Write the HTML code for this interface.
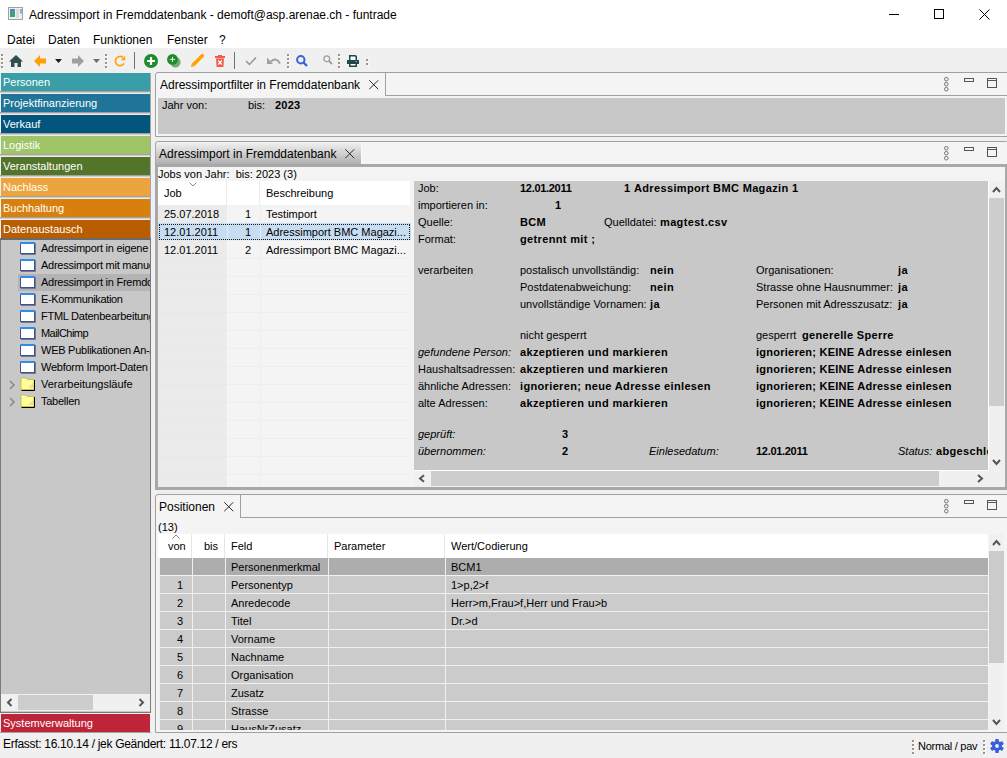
<!DOCTYPE html>
<html><head><meta charset="utf-8">
<style>
*{margin:0;padding:0;box-sizing:border-box}
html,body{width:1007px;height:758px;overflow:hidden;background:#f0f0f0;font-family:"Liberation Sans",sans-serif;color:#000}
.a{position:absolute}
svg.a{overflow:visible}
.t{position:absolute;white-space:nowrap;line-height:1}
.f12{font-size:12px}
.f11{font-size:11px}
.b{font-weight:bold;letter-spacing:0.2px}
.i{font-style:italic}
.bar{position:absolute;left:0;width:151px;height:21px;border-right:1px solid #a8a8a8}
.bar .c{position:absolute;left:1px;top:0;width:149px;height:18px}
.bar .s{position:absolute;left:0;top:18px;width:150px;height:1px;background:#a8a0a0}
.bar .l{position:absolute;left:0;top:19px;width:150px;height:2px;background:#efebea;border-top:1px solid #d0cece}
.bar span{position:absolute;left:3px;top:4px;font-size:11px;color:#fff;white-space:nowrap;line-height:1}
</style></head><body>
<div class="a" style="left:0px;top:0px;width:1007px;height:48px;background:#fff;"></div>
<svg class="a" style="left:8px;top:7px" width="15" height="13" viewBox="0 0 15 13"><rect x="0.5" y="0.5" width="14" height="12" fill="#f0f0f0" stroke="#a0a0a0"/><rect x="2" y="2" width="5" height="8" fill="url(#ig)"/><rect x="8" y="2" width="3" height="9" fill="#dcdcdc"/><rect x="12" y="2" width="2" height="4" fill="#8ab0e0"/><rect x="12" y="6" width="2" height="1" fill="#a8d8a8"/><defs><linearGradient id="ig" x1="0" y1="0" x2="0" y2="1"><stop offset="0" stop-color="#4a88c8"/><stop offset="1" stop-color="#48a858"/></linearGradient></defs></svg>
<div class="t f12" style="left:29px;top:9px;">Adressimport in Fremddatenbank - demoft@asp.arenae.ch - funtrade</div>
<div class="a" style="left:889px;top:14px;width:10px;height:1px;background:#000;"></div>
<div class="a" style="left:934px;top:9px;width:10px;height:10px;background:transparent;border:1px solid #000"></div>
<svg class="a" style="left:979px;top:9px" width="12" height="11" viewBox="0 0 12 11"><path d="M0.5 0.5L10.5 10.5M10.5 0.5L0.5 10.5" stroke="#000" stroke-width="1"/></svg>
<div class="t f12" style="left:7px;top:34px;">Datei</div>
<div class="t f12" style="left:48px;top:34px;">Daten</div>
<div class="t f12" style="left:93px;top:34px;">Funktionen</div>
<div class="t f12" style="left:167px;top:34px;">Fenster</div>
<div class="t f12" style="left:219px;top:34px;">?</div>
<div class="a" style="left:1px;top:54px;width:2px;height:2px;background:#9a9482;box-shadow:1px 1px 0 #fbfbfb"></div>
<div class="a" style="left:1px;top:58px;width:2px;height:2px;background:#9a9482;box-shadow:1px 1px 0 #fbfbfb"></div>
<div class="a" style="left:1px;top:62px;width:2px;height:2px;background:#9a9482;box-shadow:1px 1px 0 #fbfbfb"></div>
<div class="a" style="left:1px;top:66px;width:2px;height:2px;background:#9a9482;box-shadow:1px 1px 0 #fbfbfb"></div>
<div class="a" style="left:105px;top:54px;width:2px;height:2px;background:#9a9482;box-shadow:1px 1px 0 #fbfbfb"></div>
<div class="a" style="left:105px;top:58px;width:2px;height:2px;background:#9a9482;box-shadow:1px 1px 0 #fbfbfb"></div>
<div class="a" style="left:105px;top:62px;width:2px;height:2px;background:#9a9482;box-shadow:1px 1px 0 #fbfbfb"></div>
<div class="a" style="left:105px;top:66px;width:2px;height:2px;background:#9a9482;box-shadow:1px 1px 0 #fbfbfb"></div>
<div class="a" style="left:287px;top:54px;width:2px;height:2px;background:#9a9482;box-shadow:1px 1px 0 #fbfbfb"></div>
<div class="a" style="left:287px;top:58px;width:2px;height:2px;background:#9a9482;box-shadow:1px 1px 0 #fbfbfb"></div>
<div class="a" style="left:287px;top:62px;width:2px;height:2px;background:#9a9482;box-shadow:1px 1px 0 #fbfbfb"></div>
<div class="a" style="left:287px;top:66px;width:2px;height:2px;background:#9a9482;box-shadow:1px 1px 0 #fbfbfb"></div>
<div class="a" style="left:338px;top:54px;width:2px;height:2px;background:#9a9482;box-shadow:1px 1px 0 #fbfbfb"></div>
<div class="a" style="left:338px;top:58px;width:2px;height:2px;background:#9a9482;box-shadow:1px 1px 0 #fbfbfb"></div>
<div class="a" style="left:338px;top:62px;width:2px;height:2px;background:#9a9482;box-shadow:1px 1px 0 #fbfbfb"></div>
<div class="a" style="left:338px;top:66px;width:2px;height:2px;background:#9a9482;box-shadow:1px 1px 0 #fbfbfb"></div>
<div class="a" style="left:366px;top:59px;width:2px;height:2px;background:#9a9482;box-shadow:1px 1px 0 #fbfbfb"></div>
<div class="a" style="left:366px;top:63px;width:2px;height:2px;background:#9a9482;box-shadow:1px 1px 0 #fbfbfb"></div>
<svg class="a" style="left:9px;top:55px" width="14" height="12" viewBox="0 0 14 12"><path d="M7 0L0 6.5H2V12H5.5V8H8.5V12H12V6.5H14Z" fill="#2f4f4f"/></svg>
<svg class="a" style="left:34px;top:55px" width="12" height="12" viewBox="0 0 12 12"><path d="M0 6L6 0V3.5H12V8.5H6V12Z" fill="#ffa000"/></svg>
<svg class="a" style="left:55px;top:59px" width="7" height="4" viewBox="0 0 7 4"><path d="M0 0H7L3.5 4Z" fill="#1a1a1a"/></svg>
<svg class="a" style="left:72px;top:55px" width="12" height="12" viewBox="0 0 12 12"><path d="M12 6L6 0V3.5H0V8.5H6V12Z" fill="#a0a0a0"/></svg>
<svg class="a" style="left:93px;top:59px" width="7" height="4" viewBox="0 0 7 4"><path d="M0 0H7L3.5 4Z" fill="#707070"/></svg>
<svg class="a" style="left:114px;top:55px" width="12" height="12" viewBox="0 0 12 12"><path d="M9.98 8.3A4.6 4.6 0 1 1 8.96 2.48" stroke="#ffa000" stroke-width="1.6" fill="none"/><path d="M11.2 0.8V5.2H6.8Z" fill="#ffa000"/></svg>
<div class="a" style="left:134px;top:52px;width:1px;height:17px;background:#707070;"></div>
<svg class="a" style="left:144px;top:54px" width="14" height="14" viewBox="0 0 14 14"><circle cx="7" cy="7" r="7" fill="#1e8b2c"/><path d="M7 3V11M3 7H11" stroke="#fff" stroke-width="2.2"/></svg>
<svg class="a" style="left:166px;top:53px" width="16" height="16" viewBox="0 0 16 16"><circle cx="9.4" cy="9.2" r="5.2" fill="#72ae72"/><circle cx="6.5" cy="6.4" r="5.4" fill="#1e8b2c"/><path d="M6.5 3.8V9M3.9 6.4H9.1" stroke="#fff" stroke-width="0.9"/></svg>
<svg class="a" style="left:190px;top:54px" width="14" height="14" viewBox="0 0 14 14"><path d="M3 11L9.6 4.4" stroke="#ffa000" stroke-width="3.6"/><path d="M10.4 3.6L12.3 1.7" stroke="#ffa000" stroke-width="3.6" stroke-linecap="round"/><path d="M1 13L1.73 9.73L4.27 12.27Z" fill="#ffa000"/></svg>
<svg class="a" style="left:215px;top:55px" width="10" height="12" viewBox="0 0 10 12"><rect x="0" y="1" width="10" height="2" fill="#f65a47"/><rect x="3" y="0" width="4" height="1.5" fill="#f65a47"/><path d="M1 3.5H9L8.4 12H1.6Z" fill="#f65a47"/><path d="M3.2 5.5L6.8 9.5M6.8 5.5L3.2 9.5" stroke="#fff" stroke-width="1.3"/></svg>
<div class="a" style="left:234px;top:52px;width:1px;height:17px;background:#707070;"></div>
<svg class="a" style="left:245px;top:56px" width="12" height="10" viewBox="0 0 12 10"><path d="M1 5L4.5 8.5L11 1.5" stroke="#939393" stroke-width="1.5" fill="none"/></svg>
<svg class="a" style="left:267px;top:57px" width="14" height="8" viewBox="0 0 14 8"><path d="M4 4.5Q9 -0.5 13 6.5" stroke="#a0a0a0" stroke-width="2" fill="none"/><path d="M0 0.5V7H6Z" fill="#a0a0a0"/></svg>
<svg class="a" style="left:296px;top:55px" width="12" height="12" viewBox="0 0 12 12"><circle cx="4.8" cy="4.8" r="3.7" stroke="#3c5fe0" stroke-width="2" fill="none"/><path d="M7.5 7.5L11 11" stroke="#3c5fe0" stroke-width="2.4"/></svg>
<svg class="a" style="left:323px;top:55px" width="10" height="10" viewBox="0 0 10 10"><circle cx="3.8" cy="3.8" r="2.9" stroke="#9a9a9a" stroke-width="1.3" fill="none"/><path d="M6 6L9 9" stroke="#9a9a9a" stroke-width="1.8"/></svg>
<svg class="a" style="left:347px;top:55px" width="12" height="12" viewBox="0 0 12 12"><path d="M2.75 5V0.75H8L9.25 2V5" stroke="#1e4a4a" stroke-width="1.5" fill="#fff"/><path d="M7.5 0.5L9.5 2.5V0.5Z" fill="#1e4a4a"/><rect x="0" y="5" width="12" height="4" fill="#1e4a4a"/><rect x="2.75" y="8.25" width="6.5" height="3" stroke="#1e4a4a" stroke-width="1.5" fill="#fff"/><rect x="8.5" y="6" width="1.5" height="1" fill="#9ab"/></svg>
<div class="bar" style="top:73px"><div class="c" style="background:#3a9ea8"></div><div class="s"></div><div class="l"></div><span>Personen</span></div>
<div class="bar" style="top:94px"><div class="c" style="background:#1f7599"></div><div class="s"></div><div class="l"></div><span>Projektfinanzierung</span></div>
<div class="bar" style="top:115px"><div class="c" style="background:#02567e"></div><div class="s"></div><div class="l"></div><span>Verkauf</span></div>
<div class="bar" style="top:136px"><div class="c" style="background:#a0c468"></div><div class="s"></div><div class="l"></div><span>Logistik</span></div>
<div class="bar" style="top:157px"><div class="c" style="background:#53752a"></div><div class="s"></div><div class="l"></div><span>Veranstaltungen</span></div>
<div class="bar" style="top:178px"><div class="c" style="background:#eba43e"></div><div class="s"></div><div class="l"></div><span>Nachlass</span></div>
<div class="bar" style="top:199px"><div class="c" style="background:#d8800e"></div><div class="s"></div><div class="l"></div><span>Buchhaltung</span></div>
<div class="bar" style="top:220px;height:18px;border-right:1px solid #a8a8a8"><div class="c" style="background:#b95e00"></div><span>Datenaustausch</span></div>
<div class="a" style="left:0px;top:238px;width:151px;height:475px;background:#c8c8c8;border:1px solid #7a7a7a;border-top:2px solid #6a6a6a"></div>
<div class="a" style="left:18px;top:274px;width:132px;height:17px;background:#b4b4b4;"></div>
<div class="a" style="left:1px;top:240px;width:149px;height:454px;overflow:hidden">
<svg class="a" style="left:19px;top:2px" width="16" height="13" viewBox="0 0 16 13"><rect x="0.5" y="0.5" width="14" height="11" fill="#fff" stroke="#44508a" stroke-width="1"/><rect x="0" y="0" width="15" height="2" fill="#2e8ef0"/><path d="M15.5 1V12.5H1" stroke="#707a98" stroke-width="1" fill="none"/></svg>
<div class="t f11" style="left:40px;top:3px;letter-spacing:-0.25px">Adressimport in eigene</div>
<svg class="a" style="left:19px;top:19px" width="16" height="13" viewBox="0 0 16 13"><rect x="0.5" y="0.5" width="14" height="11" fill="#fff" stroke="#44508a" stroke-width="1"/><rect x="0" y="0" width="15" height="2" fill="#2e8ef0"/><path d="M15.5 1V12.5H1" stroke="#707a98" stroke-width="1" fill="none"/></svg>
<div class="t f11" style="left:40px;top:20px;letter-spacing:-0.25px">Adressimport mit manuelle</div>
<svg class="a" style="left:19px;top:36px" width="16" height="13" viewBox="0 0 16 13"><rect x="0.5" y="0.5" width="14" height="11" fill="#fff" stroke="#44508a" stroke-width="1"/><rect x="0" y="0" width="15" height="2" fill="#2e8ef0"/><path d="M15.5 1V12.5H1" stroke="#707a98" stroke-width="1" fill="none"/></svg>
<div class="t f11" style="left:40px;top:37px;letter-spacing:-0.25px">Adressimport in Fremddatenbank</div>
<svg class="a" style="left:19px;top:53px" width="16" height="13" viewBox="0 0 16 13"><rect x="0.5" y="0.5" width="14" height="11" fill="#fff" stroke="#44508a" stroke-width="1"/><rect x="0" y="0" width="15" height="2" fill="#2e8ef0"/><path d="M15.5 1V12.5H1" stroke="#707a98" stroke-width="1" fill="none"/></svg>
<div class="t f11" style="left:40px;top:54px;letter-spacing:-0.35px">E-Kommunikation</div>
<svg class="a" style="left:19px;top:70px" width="16" height="13" viewBox="0 0 16 13"><rect x="0.5" y="0.5" width="14" height="11" fill="#fff" stroke="#44508a" stroke-width="1"/><rect x="0" y="0" width="15" height="2" fill="#2e8ef0"/><path d="M15.5 1V12.5H1" stroke="#707a98" stroke-width="1" fill="none"/></svg>
<div class="t f11" style="left:40px;top:71px;letter-spacing:-0.25px">FTML Datenbearbeitung</div>
<svg class="a" style="left:19px;top:87px" width="16" height="13" viewBox="0 0 16 13"><rect x="0.5" y="0.5" width="14" height="11" fill="#fff" stroke="#44508a" stroke-width="1"/><rect x="0" y="0" width="15" height="2" fill="#2e8ef0"/><path d="M15.5 1V12.5H1" stroke="#707a98" stroke-width="1" fill="none"/></svg>
<div class="t f11" style="left:40px;top:88px;letter-spacing:-0.55px">MailChimp</div>
<svg class="a" style="left:19px;top:104px" width="16" height="13" viewBox="0 0 16 13"><rect x="0.5" y="0.5" width="14" height="11" fill="#fff" stroke="#44508a" stroke-width="1"/><rect x="0" y="0" width="15" height="2" fill="#2e8ef0"/><path d="M15.5 1V12.5H1" stroke="#707a98" stroke-width="1" fill="none"/></svg>
<div class="t f11" style="left:40px;top:105px;letter-spacing:-0.25px">WEB Publikationen An-/Abmeldung</div>
<svg class="a" style="left:19px;top:121px" width="16" height="13" viewBox="0 0 16 13"><rect x="0.5" y="0.5" width="14" height="11" fill="#fff" stroke="#44508a" stroke-width="1"/><rect x="0" y="0" width="15" height="2" fill="#2e8ef0"/><path d="M15.5 1V12.5H1" stroke="#707a98" stroke-width="1" fill="none"/></svg>
<div class="t f11" style="left:40px;top:122px;letter-spacing:-0.25px">Webform Import-Daten</div>
<svg class="a" style="left:8px;top:140px" width="7" height="10" viewBox="0 0 7 10"><path d="M1 1L5 5L1 9" stroke="#8a8a8a" stroke-width="1.6" fill="none"/></svg>
<svg class="a" style="left:18px;top:137px" width="17" height="14" viewBox="0 0 17 14"><path d="M2 12.5V2.5Q2 1 3.5 1H7L8.5 2.5H15V12.5Z" fill="#ffff9a" stroke="#c8c040"/><path d="M9 11H14V6Z" fill="#f8d8a0"/><path d="M15.5 3V13.5H2.5" stroke="#000" stroke-width="1" fill="none"/><rect x="3" y="2" width="4" height="1" fill="#fff"/></svg>
<div class="t f11" style="left:40px;top:139px;letter-spacing:0px">Verarbeitungsläufe</div>
<svg class="a" style="left:8px;top:157px" width="7" height="10" viewBox="0 0 7 10"><path d="M1 1L5 5L1 9" stroke="#8a8a8a" stroke-width="1.6" fill="none"/></svg>
<svg class="a" style="left:18px;top:154px" width="17" height="14" viewBox="0 0 17 14"><path d="M2 12.5V2.5Q2 1 3.5 1H7L8.5 2.5H15V12.5Z" fill="#ffff9a" stroke="#c8c040"/><path d="M9 11H14V6Z" fill="#f8d8a0"/><path d="M15.5 3V13.5H2.5" stroke="#000" stroke-width="1" fill="none"/><rect x="3" y="2" width="4" height="1" fill="#fff"/></svg>
<div class="t f11" style="left:40px;top:156px;letter-spacing:-0.25px">Tabellen</div>
</div>
<div class="a" style="left:1px;top:694px;width:149px;height:17px;background:#f0f0f0;"></div>
<div class="a" style="left:18px;top:695px;width:75px;height:15px;background:#cdcdcd;"></div>
<svg class="a" style="left:6px;top:698px" width="7" height="9" viewBox="0 0 7 9"><path d="M5.5 1L2 4.5L5.5 8" stroke="#555" stroke-width="2" fill="none"/></svg>
<svg class="a" style="left:138px;top:698px" width="7" height="9" viewBox="0 0 7 9"><path d="M1.5 1L5 4.5L1.5 8" stroke="#555" stroke-width="2" fill="none"/></svg>
<div class="a" style="left:1px;top:714px;width:149px;height:18px;background:#bf2539;"></div>
<div class="a" style="left:0px;top:732px;width:151px;height:1px;background:#a8a0a0;"></div>
<div class="t f11" style="left:3px;top:718px;color:#fff">Systemverwaltung</div>
<div class="t f12" style="left:3px;top:738px;letter-spacing:-0.3px">Erfasst: 16.10.14 / jek Geändert: 11.07.12 / ers</div>
<div class="a" style="left:912px;top:740px;width:2px;height:2px;background:#9a9282;box-shadow:1px 1px 0 #fff"></div>
<div class="a" style="left:983px;top:740px;width:2px;height:2px;background:#9a9282;box-shadow:1px 1px 0 #fff"></div>
<div class="a" style="left:912px;top:744px;width:2px;height:2px;background:#9a9282;box-shadow:1px 1px 0 #fff"></div>
<div class="a" style="left:983px;top:744px;width:2px;height:2px;background:#9a9282;box-shadow:1px 1px 0 #fff"></div>
<div class="a" style="left:912px;top:748px;width:2px;height:2px;background:#9a9282;box-shadow:1px 1px 0 #fff"></div>
<div class="a" style="left:983px;top:748px;width:2px;height:2px;background:#9a9282;box-shadow:1px 1px 0 #fff"></div>
<div class="a" style="left:912px;top:752px;width:2px;height:2px;background:#9a9282;box-shadow:1px 1px 0 #fff"></div>
<div class="a" style="left:983px;top:752px;width:2px;height:2px;background:#9a9282;box-shadow:1px 1px 0 #fff"></div>
<div class="t f11" style="left:918px;top:741px;letter-spacing:-0.25px">Normal / pav</div>
<svg class="a" style="left:990px;top:739px" width="14" height="14" viewBox="0 0 14 14"><g transform="translate(7 7)" fill="#3a5fd8"><circle r="4.9"/><rect x="-1.8" y="-7" width="3.6" height="3.5" rx="0.8" transform="rotate(0)"/><rect x="-1.8" y="-7" width="3.6" height="3.5" rx="0.8" transform="rotate(60)"/><rect x="-1.8" y="-7" width="3.6" height="3.5" rx="0.8" transform="rotate(120)"/><rect x="-1.8" y="-7" width="3.6" height="3.5" rx="0.8" transform="rotate(180)"/><rect x="-1.8" y="-7" width="3.6" height="3.5" rx="0.8" transform="rotate(240)"/><rect x="-1.8" y="-7" width="3.6" height="3.5" rx="0.8" transform="rotate(300)"/><circle r="1.9" fill="#f0f0f0"/></g></svg>
<div class="a" style="left:155px;top:72px;width:853px;height:65px;background:#f4f4f4;border:1px solid #a0a0a0;border-top-left-radius:3px"></div>
<div class="a" style="left:385px;top:72px;width:1px;height:24px;background:#a0a0a0;"></div>
<div class="a" style="left:385px;top:95px;width:622px;height:1px;background:#a0a0a0;"></div>
<div class="t f12" style="left:160px;top:79px;">Adressimportfilter in Fremddatenbank</div>
<svg class="a" style="left:369px;top:80px" width="10" height="10" viewBox="0 0 10 10"><path d="M0.3 0.3L9.2 9.2M9.2 0.3L0.3 9.2" stroke="#2a2a2a" stroke-width="1"/></svg>
<svg class="a" style="left:944px;top:77px" width="6" height="16" viewBox="0 0 6 16"><circle cx="2.3" cy="2.2" r="1.8" fill="none" stroke="#666" stroke-width="0.9"/><circle cx="2.3" cy="7.2" r="1.8" fill="none" stroke="#666" stroke-width="0.9"/><circle cx="2.3" cy="12.2" r="1.8" fill="none" stroke="#666" stroke-width="0.9"/></svg>
<div class="a" style="left:964px;top:78px;width:10px;height:4px;background:transparent;border:1px solid #555"></div>
<div class="a" style="left:987px;top:78px;width:10px;height:10px;background:transparent;border:1px solid #555"></div>
<div class="a" style="left:988px;top:80px;width:8px;height:1px;background:#555;"></div>
<div class="a" style="left:158px;top:98px;width:847px;height:36px;background:#c8c8c8;"></div>
<div class="t f11" style="left:162px;top:100px;">Jahr von:</div>
<div class="t f11" style="left:248px;top:100px;">bis:</div>
<div class="t f11 b" style="left:275px;top:100px;">2023</div>
<div class="a" style="left:155px;top:141px;width:853px;height:349px;background:#f4f4f4;border:3px solid #a8a8a8;border-top:1px solid #a0a0a0;border-top-left-radius:3px"></div>
<div class="a" style="left:156px;top:142px;width:205px;height:22px;background:linear-gradient(#f2f2f2,#b0b0b0);border-top-left-radius:2px"></div>
<div class="a" style="left:361px;top:142px;width:1px;height:22px;background:#f8f8f8;"></div>
<div class="a" style="left:155px;top:164px;width:853px;height:3px;background:#a8a8a8;"></div>
<div class="t f12" style="left:159px;top:148px;">Adressimport in Fremddatenbank</div>
<svg class="a" style="left:345px;top:149px" width="10" height="10" viewBox="0 0 10 10"><path d="M0.3 0.3L9.2 9.2M9.2 0.3L0.3 9.2" stroke="#2a2a2a" stroke-width="1"/></svg>
<div class="a" style="left:1005px;top:142px;width:2px;height:22px;background:#f4f4f4;"></div>
<svg class="a" style="left:944px;top:146px" width="6" height="16" viewBox="0 0 6 16"><circle cx="2.3" cy="2.2" r="1.8" fill="none" stroke="#666" stroke-width="0.9"/><circle cx="2.3" cy="7.2" r="1.8" fill="none" stroke="#666" stroke-width="0.9"/><circle cx="2.3" cy="12.2" r="1.8" fill="none" stroke="#666" stroke-width="0.9"/></svg>
<div class="a" style="left:964px;top:147px;width:10px;height:4px;background:transparent;border:1px solid #555"></div>
<div class="a" style="left:987px;top:147px;width:10px;height:10px;background:transparent;border:1px solid #555"></div>
<div class="a" style="left:988px;top:149px;width:8px;height:1px;background:#555;"></div>
<div class="t f11" style="left:158px;top:169px;">Jobs von Jahr:&nbsp; bis: 2023 (3)</div>
<div class="a" style="left:158px;top:181px;width:252px;height:24px;background:#fff;"></div>
<div class="a" style="left:226px;top:181px;width:1px;height:24px;background:#ececec;"></div>
<div class="a" style="left:259px;top:181px;width:1px;height:24px;background:#ececec;"></div>
<svg class="a" style="left:189px;top:182px" width="8" height="5" viewBox="0 0 8 5"><path d="M0.5 0.5L4 4L7.5 0.5" stroke="#888" fill="none"/></svg>
<div class="t f11" style="left:164px;top:188px;">Job</div>
<div class="t f11" style="left:266px;top:188px;">Beschreibung</div>
<div class="a" style="left:158px;top:205px;width:69px;height:282px;background:#ebebeb;"></div>
<div class="a" style="left:227px;top:205px;width:183px;height:282px;background:#f4f4f4;"></div>
<div class="a" style="left:227px;top:205px;width:1px;height:282px;background:#f6f6f6;"></div>
<div class="a" style="left:260px;top:205px;width:1px;height:282px;background:#ededed;"></div>
<div class="a" style="left:158px;top:222px;width:69px;height:1px;background:#e8e8e8;"></div>
<div class="a" style="left:227px;top:222px;width:183px;height:1px;background:#eeeeee;"></div>
<div class="a" style="left:158px;top:240px;width:69px;height:1px;background:#e8e8e8;"></div>
<div class="a" style="left:227px;top:240px;width:183px;height:1px;background:#eeeeee;"></div>
<div class="a" style="left:158px;top:258px;width:69px;height:1px;background:#e8e8e8;"></div>
<div class="a" style="left:227px;top:258px;width:183px;height:1px;background:#eeeeee;"></div>
<div class="a" style="left:158px;top:276px;width:69px;height:1px;background:#e8e8e8;"></div>
<div class="a" style="left:227px;top:276px;width:183px;height:1px;background:#eeeeee;"></div>
<div class="a" style="left:158px;top:294px;width:69px;height:1px;background:#e8e8e8;"></div>
<div class="a" style="left:227px;top:294px;width:183px;height:1px;background:#eeeeee;"></div>
<div class="a" style="left:158px;top:312px;width:69px;height:1px;background:#e8e8e8;"></div>
<div class="a" style="left:227px;top:312px;width:183px;height:1px;background:#eeeeee;"></div>
<div class="a" style="left:158px;top:330px;width:69px;height:1px;background:#e8e8e8;"></div>
<div class="a" style="left:227px;top:330px;width:183px;height:1px;background:#eeeeee;"></div>
<div class="a" style="left:158px;top:348px;width:69px;height:1px;background:#e8e8e8;"></div>
<div class="a" style="left:227px;top:348px;width:183px;height:1px;background:#eeeeee;"></div>
<div class="a" style="left:158px;top:366px;width:69px;height:1px;background:#e8e8e8;"></div>
<div class="a" style="left:227px;top:366px;width:183px;height:1px;background:#eeeeee;"></div>
<div class="a" style="left:158px;top:384px;width:69px;height:1px;background:#e8e8e8;"></div>
<div class="a" style="left:227px;top:384px;width:183px;height:1px;background:#eeeeee;"></div>
<div class="a" style="left:158px;top:402px;width:69px;height:1px;background:#e8e8e8;"></div>
<div class="a" style="left:227px;top:402px;width:183px;height:1px;background:#eeeeee;"></div>
<div class="a" style="left:158px;top:420px;width:69px;height:1px;background:#e8e8e8;"></div>
<div class="a" style="left:227px;top:420px;width:183px;height:1px;background:#eeeeee;"></div>
<div class="a" style="left:158px;top:438px;width:69px;height:1px;background:#e8e8e8;"></div>
<div class="a" style="left:227px;top:438px;width:183px;height:1px;background:#eeeeee;"></div>
<div class="a" style="left:158px;top:456px;width:69px;height:1px;background:#e8e8e8;"></div>
<div class="a" style="left:227px;top:456px;width:183px;height:1px;background:#eeeeee;"></div>
<div class="a" style="left:158px;top:474px;width:69px;height:1px;background:#e8e8e8;"></div>
<div class="a" style="left:227px;top:474px;width:183px;height:1px;background:#eeeeee;"></div>
<div class="a" style="left:158px;top:492px;width:69px;height:1px;background:#e8e8e8;"></div>
<div class="a" style="left:227px;top:492px;width:183px;height:1px;background:#eeeeee;"></div>
<div class="a" style="left:158px;top:223px;width:253px;height:17px;background:#c6ddf2;"></div>
<div class="a" style="left:227px;top:223px;width:1px;height:17px;background:#e8eef4;"></div>
<div class="a" style="left:260px;top:223px;width:1px;height:17px;background:#e8eef4;"></div>
<div class="a" style="left:159px;top:224px;width:251px;height:16px;background:transparent;border:1px dotted #1a1a1a"></div>
<div class="t f11" style="left:164px;top:209px;">25.07.2018</div>
<div class="t f11" style="left:245px;top:209px;">1</div>
<div class="t f11" style="left:266px;top:209px;">Testimport</div>
<div class="t f11" style="left:164px;top:227px;">12.01.2011</div>
<div class="t f11" style="left:245px;top:227px;">1</div>
<div class="t f11" style="left:266px;top:227px;">Adressimport BMC Magazi...</div>
<div class="t f11" style="left:164px;top:245px;">12.01.2011</div>
<div class="t f11" style="left:245px;top:245px;">2</div>
<div class="t f11" style="left:266px;top:245px;">Adressimport BMC Magazi...</div>
<div class="a" style="left:414px;top:181px;width:574px;height:289px;background:#c8c8c8;"></div>
<div class="a" style="left:988px;top:181px;width:1px;height:290px;background:#fff;"></div>
<div class="a" style="left:414px;top:470px;width:575px;height:1px;background:#fff;"></div>
<div class="a" style="left:989px;top:181px;width:16px;height:306px;background:#f0f0f0;"></div>
<div class="a" style="left:989px;top:198px;width:15px;height:208px;background:#cdcdcd;"></div>
<div class="a" style="left:414px;top:471px;width:575px;height:16px;background:#f0f0f0;"></div>
<div class="a" style="left:431px;top:471px;width:508px;height:15px;background:#cdcdcd;"></div>
<svg class="a" style="left:992px;top:186px" width="9" height="7" viewBox="0 0 9 7"><path d="M1 6L4.5 2L8 6" stroke="#555" stroke-width="2" fill="none"/></svg>
<svg class="a" style="left:992px;top:459px" width="9" height="7" viewBox="0 0 9 7"><path d="M1 1L4.5 5L8 1" stroke="#555" stroke-width="2" fill="none"/></svg>
<svg class="a" style="left:418px;top:474px" width="7" height="9" viewBox="0 0 7 9"><path d="M6 1.2L2 4.5L6 7.8" stroke="#555" stroke-width="2" fill="none"/></svg>
<svg class="a" style="left:977px;top:474px" width="7" height="9" viewBox="0 0 7 9"><path d="M1 1L5 4.5L1 8" stroke="#555" stroke-width="2" fill="none"/></svg>
<div class="a" style="left:414px;top:181px;width:574px;height:289px;overflow:hidden">
<div class="t f11" style="left:4px;top:2px;">Job:</div>
<div class="t f11 b" style="left:106px;top:2px;letter-spacing:-0.3px">12.01.2011</div>
<div class="t f11 b" style="left:210px;top:2px;letter-spacing:0.35px">1</div>
<div class="t f11 b" style="left:220px;top:2px;letter-spacing:0.35px">Adressimport BMC Magazin 1</div>
<div class="t f11" style="left:4px;top:19px;">importieren in:</div>
<div class="t f11 b" style="left:141px;top:19px;letter-spacing:0.35px">1</div>
<div class="t f11" style="left:4px;top:36px;">Quelle:</div>
<div class="t f11 b" style="left:106px;top:36px;letter-spacing:0.35px">BCM</div>
<div class="t f11" style="left:190px;top:36px;">Quelldatei:</div>
<div class="t f11 b" style="left:246px;top:36px;letter-spacing:0.35px">magtest.csv</div>
<div class="t f11" style="left:4px;top:53px;">Format:</div>
<div class="t f11 b" style="left:106px;top:53px;letter-spacing:0.35px">getrennt mit ;</div>
<div class="t f11" style="left:4px;top:84px;">verarbeiten</div>
<div class="t f11" style="left:106px;top:84px;">postalisch unvollständig:</div>
<div class="t f11 b" style="left:236px;top:84px;letter-spacing:0.35px">nein</div>
<div class="t f11" style="left:342px;top:84px;">Organisationen:</div>
<div class="t f11 b" style="left:484px;top:84px;letter-spacing:0.35px">ja</div>
<div class="t f11" style="left:106px;top:101px;">Postdatenabweichung:</div>
<div class="t f11 b" style="left:236px;top:101px;letter-spacing:0.35px">nein</div>
<div class="t f11" style="left:342px;top:101px;">Strasse ohne Hausnummer:</div>
<div class="t f11 b" style="left:484px;top:101px;letter-spacing:0.35px">ja</div>
<div class="t f11" style="left:106px;top:118px;">unvollständige Vornamen:</div>
<div class="t f11 b" style="left:236px;top:118px;letter-spacing:0.35px">ja</div>
<div class="t f11" style="left:342px;top:118px;">Personen mit Adresszusatz:</div>
<div class="t f11 b" style="left:484px;top:118px;letter-spacing:0.35px">ja</div>
<div class="t f11" style="left:106px;top:149px;">nicht gesperrt</div>
<div class="t f11" style="left:342px;top:149px;">gesperrt</div>
<div class="t f11 b" style="left:388px;top:149px;letter-spacing:0.35px">generelle Sperre</div>
<div class="t f11 i" style="left:4px;top:166px;">gefundene Person:</div>
<div class="t f11 b" style="left:106px;top:166px;letter-spacing:0.35px">akzeptieren und markieren</div>
<div class="t f11 b" style="left:342px;top:166px;letter-spacing:0.25px">ignorieren; KEINE Adresse einlesen</div>
<div class="t f11" style="left:4px;top:183px;">Haushaltsadressen:</div>
<div class="t f11 b" style="left:106px;top:183px;letter-spacing:0.35px">akzeptieren und markieren</div>
<div class="t f11 b" style="left:342px;top:183px;letter-spacing:0.25px">ignorieren; KEINE Adresse einlesen</div>
<div class="t f11" style="left:4px;top:200px;">ähnliche Adressen:</div>
<div class="t f11 b" style="left:106px;top:200px;letter-spacing:0.35px">ignorieren; neue Adresse einlesen</div>
<div class="t f11 b" style="left:342px;top:200px;letter-spacing:0.25px">ignorieren; KEINE Adresse einlesen</div>
<div class="t f11" style="left:4px;top:217px;">alte Adressen:</div>
<div class="t f11 b" style="left:106px;top:217px;letter-spacing:0.35px">akzeptieren und markieren</div>
<div class="t f11 b" style="left:342px;top:217px;letter-spacing:0.25px">ignorieren; KEINE Adresse einlesen</div>
<div class="t f11 i" style="left:4px;top:248px;">geprüft:</div>
<div class="t f11 b" style="left:148px;top:248px;letter-spacing:0.35px">3</div>
<div class="t f11 i" style="left:4px;top:265px;">übernommen:</div>
<div class="t f11 b" style="left:148px;top:265px;letter-spacing:0.35px">2</div>
<div class="t f11 i" style="left:235px;top:265px;">Einlesedatum:</div>
<div class="t f11 b" style="left:342px;top:265px;letter-spacing:-0.3px">12.01.2011</div>
<div class="t f11 i" style="left:484px;top:265px;">Status:</div>
<div class="t f11 b" style="left:522px;top:265px;letter-spacing:0.35px">abgeschlossen</div>
</div>
<div class="a" style="left:155px;top:494px;width:853px;height:239px;background:#f4f4f4;border:1px solid #a0a0a0;border-top-left-radius:3px"></div>
<div class="a" style="left:240px;top:494px;width:1px;height:24px;background:#a0a0a0;"></div>
<div class="a" style="left:240px;top:517px;width:767px;height:1px;background:#a0a0a0;"></div>
<div class="t f12" style="left:159px;top:501px;">Positionen</div>
<svg class="a" style="left:224px;top:502px" width="10" height="10" viewBox="0 0 10 10"><path d="M0.3 0.3L9.2 9.2M9.2 0.3L0.3 9.2" stroke="#2a2a2a" stroke-width="1"/></svg>
<svg class="a" style="left:944px;top:499px" width="6" height="16" viewBox="0 0 6 16"><circle cx="2.3" cy="2.2" r="1.8" fill="none" stroke="#666" stroke-width="0.9"/><circle cx="2.3" cy="7.2" r="1.8" fill="none" stroke="#666" stroke-width="0.9"/><circle cx="2.3" cy="12.2" r="1.8" fill="none" stroke="#666" stroke-width="0.9"/></svg>
<div class="a" style="left:964px;top:500px;width:10px;height:4px;background:transparent;border:1px solid #555"></div>
<div class="a" style="left:987px;top:500px;width:10px;height:10px;background:transparent;border:1px solid #555"></div>
<div class="a" style="left:988px;top:502px;width:8px;height:1px;background:#555;"></div>
<div class="t f11" style="left:158px;top:522px;">(13)</div>
<div class="a" style="left:158px;top:534px;width:830px;height:24px;background:#fff;"></div>
<div class="a" style="left:191px;top:534px;width:1px;height:24px;background:#e6e6e6;"></div>
<div class="a" style="left:224px;top:534px;width:1px;height:24px;background:#e6e6e6;"></div>
<div class="a" style="left:327px;top:534px;width:1px;height:24px;background:#e6e6e6;"></div>
<div class="a" style="left:444px;top:534px;width:1px;height:24px;background:#e6e6e6;"></div>
<svg class="a" style="left:172px;top:534px" width="8" height="5" viewBox="0 0 8 5"><path d="M0.5 4.5L4 1L7.5 4.5" stroke="#888" fill="none"/></svg>
<div class="t f11" style="left:168px;top:541px;">von</div>
<div class="t f11" style="left:204px;top:541px;">bis</div>
<div class="t f11" style="left:231px;top:541px;">Feld</div>
<div class="t f11" style="left:334px;top:541px;">Parameter</div>
<div class="t f11" style="left:451px;top:541px;">Wert/Codierung</div>
<div class="a" style="left:158px;top:558px;width:830px;height:172px;overflow:hidden;background:#f0f0f0">
<div class="a" style="left:2px;top:0px;width:32px;height:17px;background:#adadad;"></div>
<div class="a" style="left:35px;top:0px;width:32px;height:17px;background:#adadad;"></div>
<div class="a" style="left:68px;top:0px;width:102px;height:17px;background:#adadad;"></div>
<div class="a" style="left:171px;top:0px;width:116px;height:17px;background:#adadad;"></div>
<div class="a" style="left:288px;top:0px;width:542px;height:17px;background:#adadad;"></div>
<div class="t f11" style="left:73px;top:4px;">Personenmerkmal</div>
<div class="t f11" style="left:293px;top:4px;">BCM1</div>
<div class="a" style="left:2px;top:18px;width:32px;height:17px;background:#cbcbcb;"></div>
<div class="a" style="left:35px;top:18px;width:32px;height:17px;background:#cbcbcb;"></div>
<div class="a" style="left:68px;top:18px;width:102px;height:17px;background:#cbcbcb;"></div>
<div class="a" style="left:171px;top:18px;width:116px;height:17px;background:#cbcbcb;"></div>
<div class="a" style="left:288px;top:18px;width:542px;height:17px;background:#cbcbcb;"></div>
<div class="t f11" style="left:0px;top:22px;width:25px;text-align:right">1</div>
<div class="t f11" style="left:73px;top:22px;">Personentyp</div>
<div class="t f11" style="left:293px;top:22px;">1&gt;p,2&gt;f</div>
<div class="a" style="left:2px;top:36px;width:32px;height:17px;background:#cbcbcb;"></div>
<div class="a" style="left:35px;top:36px;width:32px;height:17px;background:#cbcbcb;"></div>
<div class="a" style="left:68px;top:36px;width:102px;height:17px;background:#cbcbcb;"></div>
<div class="a" style="left:171px;top:36px;width:116px;height:17px;background:#cbcbcb;"></div>
<div class="a" style="left:288px;top:36px;width:542px;height:17px;background:#cbcbcb;"></div>
<div class="t f11" style="left:0px;top:40px;width:25px;text-align:right">2</div>
<div class="t f11" style="left:73px;top:40px;">Anredecode</div>
<div class="t f11" style="left:293px;top:40px;">Herr&gt;m,Frau&gt;f,Herr und Frau&gt;b</div>
<div class="a" style="left:2px;top:54px;width:32px;height:17px;background:#cbcbcb;"></div>
<div class="a" style="left:35px;top:54px;width:32px;height:17px;background:#cbcbcb;"></div>
<div class="a" style="left:68px;top:54px;width:102px;height:17px;background:#cbcbcb;"></div>
<div class="a" style="left:171px;top:54px;width:116px;height:17px;background:#cbcbcb;"></div>
<div class="a" style="left:288px;top:54px;width:542px;height:17px;background:#cbcbcb;"></div>
<div class="t f11" style="left:0px;top:58px;width:25px;text-align:right">3</div>
<div class="t f11" style="left:73px;top:58px;">Titel</div>
<div class="t f11" style="left:293px;top:58px;">Dr.&gt;d</div>
<div class="a" style="left:2px;top:72px;width:32px;height:17px;background:#cbcbcb;"></div>
<div class="a" style="left:35px;top:72px;width:32px;height:17px;background:#cbcbcb;"></div>
<div class="a" style="left:68px;top:72px;width:102px;height:17px;background:#cbcbcb;"></div>
<div class="a" style="left:171px;top:72px;width:116px;height:17px;background:#cbcbcb;"></div>
<div class="a" style="left:288px;top:72px;width:542px;height:17px;background:#cbcbcb;"></div>
<div class="t f11" style="left:0px;top:76px;width:25px;text-align:right">4</div>
<div class="t f11" style="left:73px;top:76px;">Vorname</div>
<div class="a" style="left:2px;top:90px;width:32px;height:17px;background:#cbcbcb;"></div>
<div class="a" style="left:35px;top:90px;width:32px;height:17px;background:#cbcbcb;"></div>
<div class="a" style="left:68px;top:90px;width:102px;height:17px;background:#cbcbcb;"></div>
<div class="a" style="left:171px;top:90px;width:116px;height:17px;background:#cbcbcb;"></div>
<div class="a" style="left:288px;top:90px;width:542px;height:17px;background:#cbcbcb;"></div>
<div class="t f11" style="left:0px;top:94px;width:25px;text-align:right">5</div>
<div class="t f11" style="left:73px;top:94px;">Nachname</div>
<div class="a" style="left:2px;top:108px;width:32px;height:17px;background:#cbcbcb;"></div>
<div class="a" style="left:35px;top:108px;width:32px;height:17px;background:#cbcbcb;"></div>
<div class="a" style="left:68px;top:108px;width:102px;height:17px;background:#cbcbcb;"></div>
<div class="a" style="left:171px;top:108px;width:116px;height:17px;background:#cbcbcb;"></div>
<div class="a" style="left:288px;top:108px;width:542px;height:17px;background:#cbcbcb;"></div>
<div class="t f11" style="left:0px;top:112px;width:25px;text-align:right">6</div>
<div class="t f11" style="left:73px;top:112px;">Organisation</div>
<div class="a" style="left:2px;top:126px;width:32px;height:17px;background:#cbcbcb;"></div>
<div class="a" style="left:35px;top:126px;width:32px;height:17px;background:#cbcbcb;"></div>
<div class="a" style="left:68px;top:126px;width:102px;height:17px;background:#cbcbcb;"></div>
<div class="a" style="left:171px;top:126px;width:116px;height:17px;background:#cbcbcb;"></div>
<div class="a" style="left:288px;top:126px;width:542px;height:17px;background:#cbcbcb;"></div>
<div class="t f11" style="left:0px;top:130px;width:25px;text-align:right">7</div>
<div class="t f11" style="left:73px;top:130px;">Zusatz</div>
<div class="a" style="left:2px;top:144px;width:32px;height:17px;background:#cbcbcb;"></div>
<div class="a" style="left:35px;top:144px;width:32px;height:17px;background:#cbcbcb;"></div>
<div class="a" style="left:68px;top:144px;width:102px;height:17px;background:#cbcbcb;"></div>
<div class="a" style="left:171px;top:144px;width:116px;height:17px;background:#cbcbcb;"></div>
<div class="a" style="left:288px;top:144px;width:542px;height:17px;background:#cbcbcb;"></div>
<div class="t f11" style="left:0px;top:148px;width:25px;text-align:right">8</div>
<div class="t f11" style="left:73px;top:148px;">Strasse</div>
<div class="a" style="left:2px;top:162px;width:32px;height:17px;background:#cbcbcb;"></div>
<div class="a" style="left:35px;top:162px;width:32px;height:17px;background:#cbcbcb;"></div>
<div class="a" style="left:68px;top:162px;width:102px;height:17px;background:#cbcbcb;"></div>
<div class="a" style="left:171px;top:162px;width:116px;height:17px;background:#cbcbcb;"></div>
<div class="a" style="left:288px;top:162px;width:542px;height:17px;background:#cbcbcb;"></div>
<div class="t f11" style="left:0px;top:166px;width:25px;text-align:right">9</div>
<div class="t f11" style="left:73px;top:166px;">HausNrZusatz</div>
</div>
<div class="a" style="left:989px;top:534px;width:15px;height:196px;background:#f0f0f0;"></div>
<div class="a" style="left:989px;top:551px;width:15px;height:112px;background:#cbcbcb;"></div>
<svg class="a" style="left:992px;top:539px" width="9" height="7" viewBox="0 0 9 7"><path d="M1 6L4.5 2L8 6" stroke="#555" stroke-width="2" fill="none"/></svg>
<svg class="a" style="left:992px;top:719px" width="9" height="7" viewBox="0 0 9 7"><path d="M1 1L4.5 5L8 1" stroke="#555" stroke-width="2" fill="none"/></svg>
</body></html>
